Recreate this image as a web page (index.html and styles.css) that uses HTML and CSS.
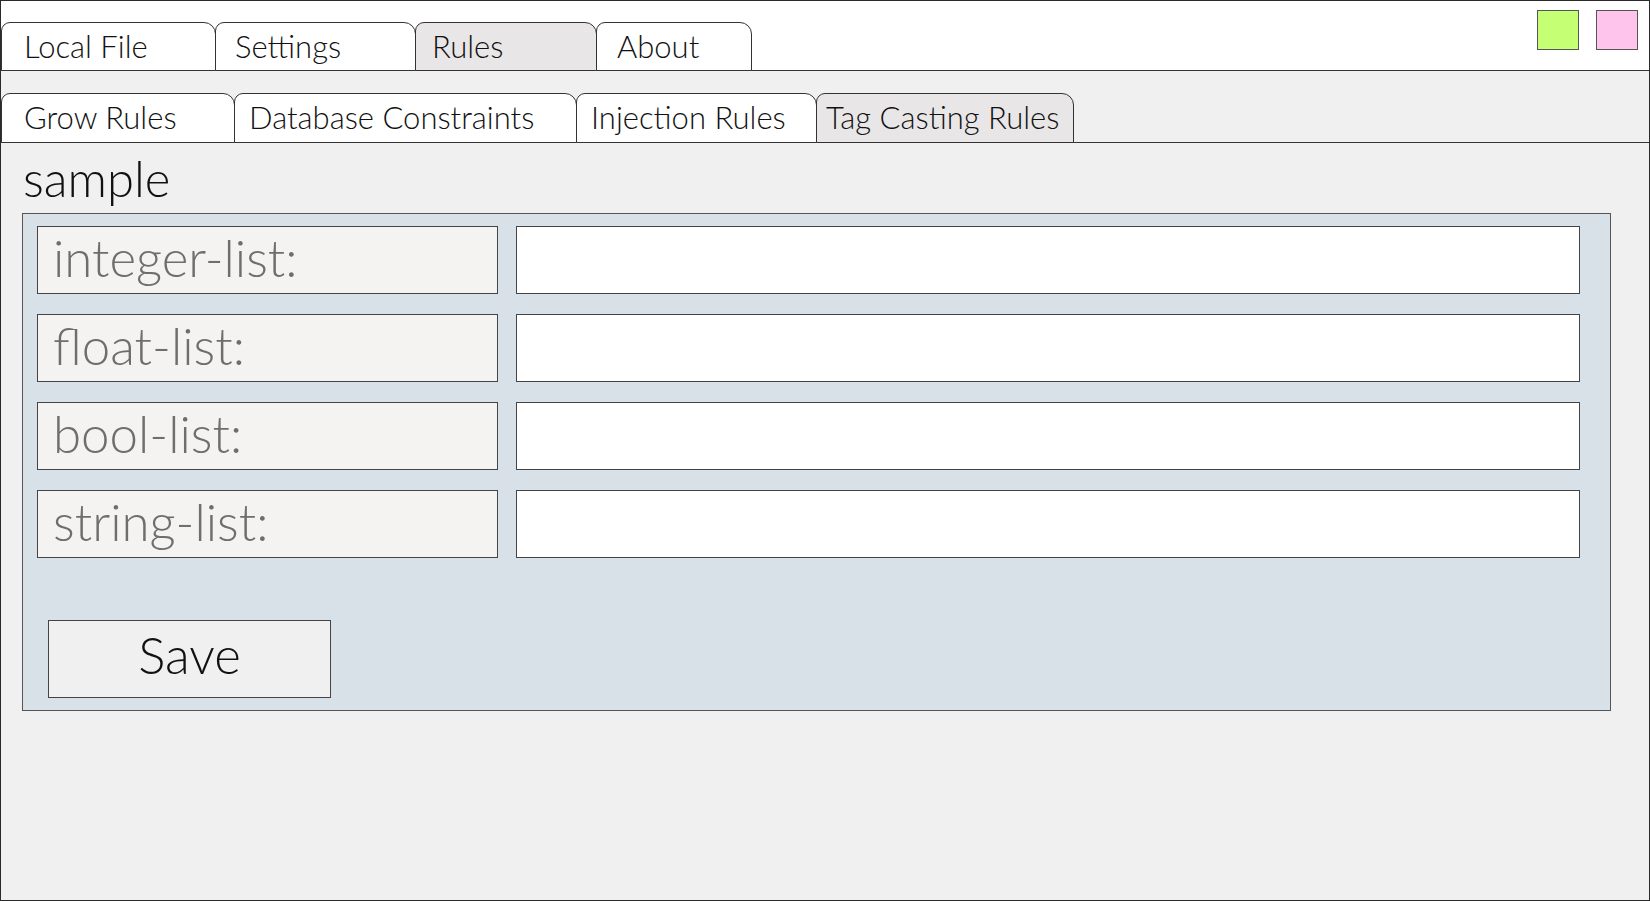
FILE: index.html
```html
<!DOCTYPE html>
<html>
<head>
<meta charset="utf-8">
<link rel="stylesheet" href="styles.css">
</head>
<body>
<div class="window">
  <div class="topbar">
    <div class="tabs">
      <div class="tab t-local">Local File</div>
      <div class="tab t-settings">Settings</div>
      <div class="tab t-rules active">Rules</div>
      <div class="tab t-about">About</div>
    </div>
    <div class="winbtns">
      <div class="wbtn green"></div>
      <div class="wbtn pink"></div>
    </div>
  </div>
  <div class="content">
    <div class="subtabs">
      <div class="stab s-grow">Grow Rules</div>
      <div class="stab s-db">Database Constraints</div>
      <div class="stab s-inj">Injection Rules</div>
      <div class="stab s-tag active">Tag Casting Rules</div>
    </div>
    <div class="title">sample</div>
    <div class="panel">
      <div class="row"><div class="label">integer-list:</div><div class="input"></div></div>
      <div class="row"><div class="label">float-list:</div><div class="input"></div></div>
      <div class="row"><div class="label">bool-list:</div><div class="input"></div></div>
      <div class="row"><div class="label">string-list:</div><div class="input"></div></div>
      <div class="save">Save</div>
    </div>
  </div>
</div>
</body>
</html>
```

FILE: styles.css
```css
* { box-sizing: border-box; }
html, body { margin: 0; padding: 0; }
body {
  font-family: "Lato", "Noto Sans", sans-serif;
  font-weight: 300;
  background: #f0f0f0;
}
.window {
  width: 1650px;
  height: 901px;
  border: 1px solid #2a2a2a;
  background: #f0f0f0;
  display: flex;
  flex-direction: column;
}
.topbar {
  height: 70px;
  background: #ffffff;
  border-bottom: 1px solid #333;
  display: flex;
  justify-content: space-between;
  align-items: flex-start;
}
.tabs {
  display: flex;
  align-self: flex-end;
  height: 49px;
  margin-bottom: -1px;
}
.tab {
  height: 49px;
  border: 1px solid #333;
  border-radius: 9px 12px 0 0;
  background: #fff;
  font-size: 31px;
  line-height: 46px;
  padding-left: 22px;
  color: #111;
  margin-right: -1px;
}
.tab.active { background: #e8e6e6; }
.t-local { width: 215px; }
.t-settings { width: 201px; padding-left: 19px; }
.t-rules { width: 182px; padding-left: 16px; }
.t-about { width: 156px; padding-left: 20px; }
.winbtns {
  display: flex;
  gap: 17px;
  margin-top: 9px;
  margin-right: 11px;
}
.wbtn {
  width: 42px;
  height: 40px;
  border: 1px solid #555;
}
.green { background: #c4ff74; }
.pink { background: #ffc4ec; }
.content {
  flex: 1;
  display: flex;
  flex-direction: column;
}
.subtabs {
  display: flex;
  margin-top: 22px;
  height: 50px;
  border-bottom: 1px solid #333;
}
.stab {
  height: 50px;
  border: 1px solid #333;
  border-radius: 9px 12px 0 0;
  background: #fff;
  font-size: 31px;
  line-height: 46px;
  padding-left: 22px;
  color: #111;
  margin-right: -1px;
}
.stab.active { background: #e8e6e6; }
.s-grow { width: 234px; }
.s-db { width: 343px; padding-left: 14px; }
.s-inj { width: 241px; padding-left: 14px; }
.s-tag { width: 258px; padding-left: 9px; }
.title {
  font-size: 49px;
  line-height: 70px;
  padding-left: 22px;
  color: #111;
}
.panel {
  margin-left: 21px;
  width: 1589px;
  height: 498px;
  background: #d9e1e8;
  border: 1px solid #555;
  padding: 12px 0 0 14px;
  display: flex;
  flex-direction: column;
  gap: 20px;
}
.row {
  display: flex;
  gap: 18px;
  height: 68px;
}
.label {
  width: 461px;
  background: #f5f2f2;
  border: 1px solid #444;
  font-size: 51px;
  line-height: 62px;
  padding-left: 15px;
  color: #6e6e6e;
}
.input {
  width: 1064px;
  background: #fff;
  border: 1px solid #444;
}
.save {
  margin-top: 42px;
  margin-left: 11px;
  width: 283px;
  height: 78px;
  border: 1px solid #444;
  background: #f0f0f0;
  font-size: 51px;
  line-height: 68px;
  text-align: center;
  color: #111;
}
```
